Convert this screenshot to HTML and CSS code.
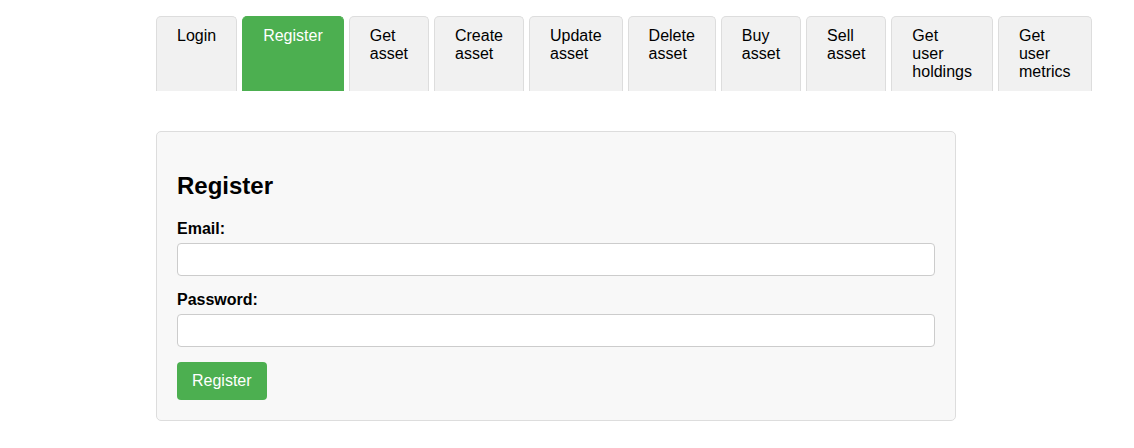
FILE: index.html
```html
<!DOCTYPE html>
<html lang="en">
<head>
<meta charset="utf-8">
<title>Register</title>
<link rel="stylesheet" href="styles.css">
</head>
<body>
<div class="page">
  <nav class="tabs">
    <button class="tab">Login</button>
    <button class="tab active">Register</button>
    <button class="tab">Get asset</button>
    <button class="tab">Create asset</button>
    <button class="tab">Update asset</button>
    <button class="tab">Delete asset</button>
    <button class="tab">Buy asset</button>
    <button class="tab">Sell asset</button>
    <button class="tab">Get user holdings</button>
    <button class="tab">Get user metrics</button>
  </nav>
  <section class="card">
    <h2 class="title">Register</h2>
    <label class="label" for="email">Email:</label>
    <input class="field" id="email" type="email">
    <label class="label" for="password">Password:</label>
    <input class="field" id="password" type="password">
    <button class="submit">Register</button>
  </section>
</div>
</body>
</html>
```
FILE: styles.css
```css
html, body {
  margin: 0;
  padding: 0;
  background: #fff;
}
body {
  font-family: "Liberation Sans", Arial, sans-serif;
  font-size: 16px;
  color: #000;
}
.page {
  padding: 16px 0 0 156px;
  width: 800px;
}
.tabs {
  display: flex;
  gap: 5px;
  align-items: stretch;
  margin-bottom: 40px;
}
.tab {
  flex: none;
  width: min-content;
  font: inherit;
  font-size: 16px;
  line-height: 18px;
  color: #000;
  text-align: left;
  background: #f1f1f1;
  border: 1px solid #ddd;
  border-bottom: none;
  border-radius: 5px 5px 0 0;
  padding: 10px 20px 10px;
  display: flex;
  align-items: flex-start;
  cursor: pointer;
}
.tab.active {
  background: #4caf50;
  border-color: #4caf50;
  color: #fff;
}
.card {
  display: flex;
  flex-direction: column;
  align-items: flex-start;
  background: #f8f8f8;
  border: 1px solid #ddd;
  border-radius: 5px;
  padding: 20px;
}
.title {
  font-size: 24px;
  font-weight: bold;
  margin: 20px 0 20px;
  line-height: 27.6px;
}
.label {
  display: block;
  font-weight: bold;
  line-height: 18.4px;
  margin-bottom: 5px;
}
.field {
  box-sizing: border-box;
  width: 100%;
  height: 33px;
  padding: 8px;
  border: 1px solid #ccc;
  border-radius: 4px;
  background: #fff;
  font: inherit;
  margin: 0 0 15px;
}
.submit {
  font: inherit;
  font-size: 16px;
  line-height: 18px;
  padding: 10px 15px;
  background: #4caf50;
  color: #fff;
  border: none;
  border-radius: 4px;
  cursor: pointer;
}
```
